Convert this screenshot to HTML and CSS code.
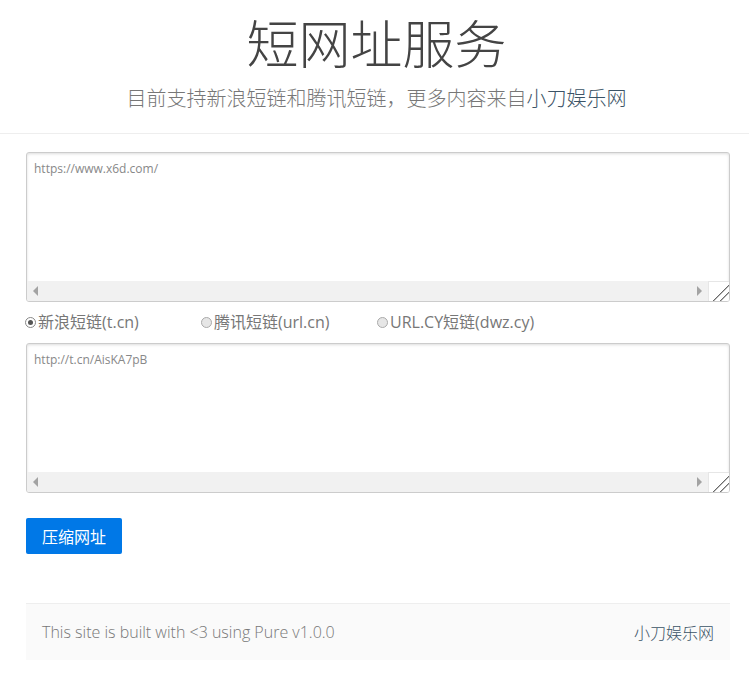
FILE: index.html
```html
<!DOCTYPE html>
<html lang="zh-CN">
<head>
  <meta charset="UTF-8">
  <meta name="viewport" content="width=device-width, initial-scale=1.0">
  <link rel="stylesheet" href="styles.css">
  <title>短网址服务</title>
</head>
<body>
  <div class="header">
    <h1>短网址服务</h1>
    <h2>目前支持新浪短链和腾讯短链，更多内容来自<a href="#">小刀娱乐网</a></h2>
  </div>

  <div class="content">
    <div class="box">
      <textarea placeholder="https://www.x6d.com/"></textarea>
      <div class="hscroll">
        <span class="arrow left"></span>
        <span class="track"></span>
        <span class="arrow right"></span>
        <span class="grip"></span>
      </div>
    </div>

    <div class="choices">
      <label class="choice"><span class="dot on"></span>新浪短链(t.cn)</label>
      <label class="choice"><span class="dot"></span>腾讯短链(url.cn)</label>
      <label class="choice"><span class="dot"></span>URL.CY短链(dwz.cy)</label>
    </div>

    <div class="box">
      <textarea placeholder="http://t.cn/AisKA7pB"></textarea>
      <div class="hscroll">
        <span class="arrow left"></span>
        <span class="track"></span>
        <span class="arrow right"></span>
        <span class="grip"></span>
      </div>
    </div>

    <button class="btn">压缩网址</button>

    <div class="footer">
      <span>This site is built with &lt;3 using Pure v1.0.0</span>
      <a href="#">小刀娱乐网</a>
    </div>
  </div>
</body>
</html>
```

FILE: styles.css
```css
* {
  margin: 0;
  padding: 0;
  box-sizing: border-box
}
body {
  font-family: "Open Sans", "Noto Sans CJK SC", sans-serif;
  color: #777;
  background: #fff
}
a {
  color: #3b5366;
  text-decoration: none
}

.header {
  text-align: center;
  padding: 11px 0 19px 4px;
  border-bottom: 1px solid #eee
}
.header h1 {
  font-size: 52px;
  font-weight: 300;
  line-height: 66px;
  color: #444
}
.header h2 {
  font-size: 20px;
  font-weight: 300;
  line-height: 30px;
  margin-top: 7px;
  color: #777
}

.content {
  width: 704px;
  margin: 18px 0 0 26px
}

.box {
  border: 1px solid #ccc;
  border-radius: 3px;
  box-shadow: inset 0 1px 3px #ddd;
  overflow: hidden
}
.box textarea {
  display: block;
  width: 100%;
  height: 128px;
  border: 0;
  resize: none;
  outline: none;
  padding: 7px 7px;
  font-family: "Open Sans", sans-serif;
  font-size: 12px;
  background: transparent
}
.box textarea::placeholder {
  color: #888
}
.hscroll {
  display: flex;
  height: 20px;
  background: #f1f1f1
}
.hscroll .track {
  flex: 1
}
.arrow {
  width: 17px;
  display: flex;
  align-items: center;
  justify-content: center
}
.arrow::before {
  content: "";
  border-top: 5px solid transparent;
  border-bottom: 5px solid transparent
}
.arrow.left::before {
  border-right: 5px solid #a3a3a3
}
.arrow.right::before {
  border-left: 5px solid #a3a3a3
}
.grip {
  width: 21px;
  background: #fff;
  border-left: 1px solid #e6e6e6;
  border-top: 1px solid #e6e6e6;
  background-image: linear-gradient(135deg, transparent 58%, #666 59%, #666 61%, transparent 62%, transparent 76%, #666 77%, #666 79%, transparent 80%)
}

.choices {
  display: flex;
  margin: 11px 0 12px -1px;
  font-size: 16px;
  line-height: 18px;
  color: #777
}
.choice {
  width: 176px;
  display: flex;
  align-items: center
}
.dot {
  width: 11px;
  height: 11px;
  border-radius: 50%;
  border: 1px solid #aaa;
  background: #e6e6e6;
  margin-right: 2px;
  position: relative
}
.dot.on {
  background: #fff;
  border-color: #888
}
.dot.on::after {
  content: "";
  position: absolute;
  left: 2px;
  top: 2px;
  width: 5px;
  height: 5px;
  border-radius: 50%;
  background: #555
}

.btn {
  display: block;
  margin-top: 25px;
  padding: 0 16px;
  height: 36px;
  font-family: "Noto Sans CJK SC", sans-serif;
  font-size: 16px;
  color: #fff;
  background: #0078e7;
  border: 0;
  border-radius: 2px
}

.footer {
  display: flex;
  justify-content: space-between;
  align-items: center;
  margin-top: 49px;
  height: 57px;
  padding: 0 16px;
  background: #fafafa;
  border-top: 1px solid #eee;
  font-size: 16px;
  font-weight: 300;
  color: #777
}
```
